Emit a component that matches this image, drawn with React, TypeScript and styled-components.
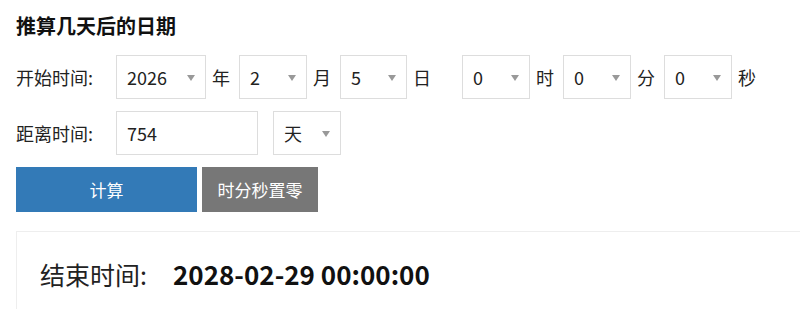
import React from "react";
import styled, { createGlobalStyle } from "styled-components";

const Global = createGlobalStyle`
  html, body { margin: 0; padding: 0; background: #fff; overflow: hidden; }
  body { font-family: "Noto Sans CJK SC", "Noto Sans", sans-serif; color: #222; }
`;

const Page = styled.div`
  padding: 12px 0 0 16px;
  width: 800px;
  box-sizing: border-box;
`;

const Title = styled.h3`
  margin: 0 0 15px;
  font-size: 20px;
  line-height: 28px;
  font-weight: 700;
  color: #111;
`;

const Row = styled.div`
  display: flex;
  align-items: center;
  height: 44px;
  margin-bottom: 12px;
`;

const Label = styled.span`
  width: 100px;
  font-size: 18px;
  color: #222;
`;

const Unit = styled.span<{ $after?: number }>`
  font-size: 18px;
  margin: 0 ${(p) => p.$after ?? 9}px 0 6px;
  color: #222;
`;

const SelectBox = styled.div<{ $w: number }>`
  position: relative;
  width: ${(p) => p.$w}px;
  height: 44px;
  box-sizing: border-box;
  border: 1px solid #ddd;
  display: flex;
  align-items: center;
  padding-left: 10px;
  font-size: 18px;
  color: #222;
  &::after {
    content: "";
    position: absolute;
    right: 10px;
    top: 19px;
    border-left: 4px solid transparent;
    border-right: 4px solid transparent;
    border-top: 6px solid #999;
  }
`;

const TextInput = styled.div`
  width: 142px;
  height: 44px;
  box-sizing: border-box;
  border: 1px solid #ddd;
  display: flex;
  align-items: center;
  padding-left: 10px;
  font-size: 18px;
  margin-right: 15px;
`;

const Buttons = styled.div`
  display: flex;
  gap: 5px;
  margin-bottom: 19px;
`;

const Button = styled.button<{ $w: number; $bg: string }>`
  width: ${(p) => p.$w}px;
  height: 45px;
  border: none;
  background: ${(p) => p.$bg};
  color: #fff;
  font-family: inherit;
  font-size: 17px;
  padding: 0;
`;

const Result = styled.div`
  border: 1px solid #eee;
  border-right: none;
  margin-right: -20px;
  padding: 23px 0 40px 23px;
  display: flex;
  align-items: center;
`;

const ResultLabel = styled.span`
  font-size: 25px;
  color: #222;
  width: 133px;
`;

const ResultValue = styled.span`
  font-size: 26px;
  font-weight: 700;
  color: #111;
`;

function Select({ w, v }: { w: number; v: string }) {
  return <SelectBox $w={w}>{v}</SelectBox>;
}

export default function App() {
  return (
    <>
      <Global />
      <Page>
        <Title>推算几天后的日期</Title>
        <Row>
          <Label>开始时间:</Label>
          <Select w={90} v="2026" />
          <Unit>年</Unit>
          <Select w={68} v="2" />
          <Unit>月</Unit>
          <Select w={67} v="5" />
          <Unit $after={31}>日</Unit>
          <Select w={68} v="0" />
          <Unit>时</Unit>
          <Select w={68} v="0" />
          <Unit>分</Unit>
          <Select w={68} v="0" />
          <Unit>秒</Unit>
        </Row>
        <Row>
          <Label>距离时间:</Label>
          <TextInput>754</TextInput>
          <Select w={68} v="天" />
        </Row>
        <Buttons>
          <Button $w={181} $bg="#337ab7">计算</Button>
          <Button $w={116} $bg="#777">时分秒置零</Button>
        </Buttons>
        <Result>
          <ResultLabel>结束时间:</ResultLabel>
          <ResultValue>2028-02-29 00:00:00</ResultValue>
        </Result>
      </Page>
    </>
  );
}
